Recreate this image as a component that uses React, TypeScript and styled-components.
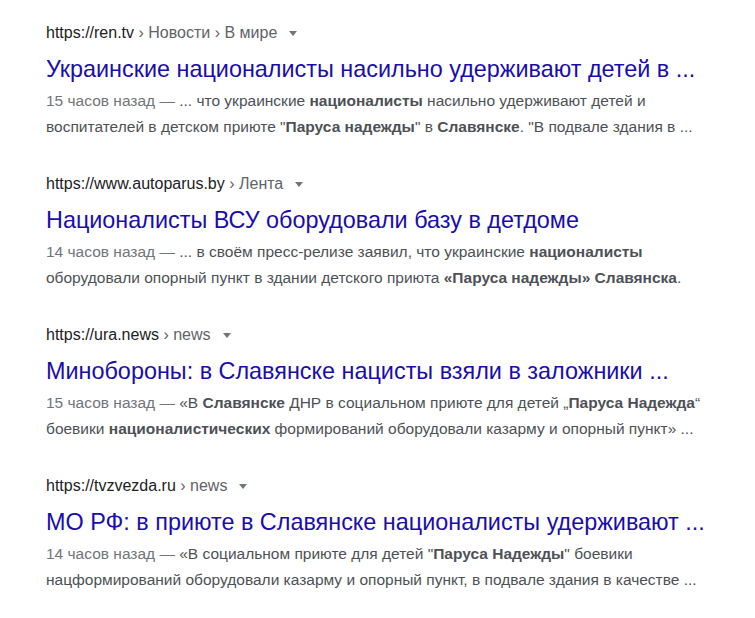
import React from 'react';
import styled, { createGlobalStyle } from 'styled-components';

const GlobalStyle = createGlobalStyle`
  body {
    margin: 0;
    background: #ffffff;
    font-family: Arial, "Liberation Sans", sans-serif;
  }
`;

const Page = styled.div`
  width: 755px;
  min-height: 618px;
  box-sizing: border-box;
  padding: 20px 0 0 46px;
  display: flex;
  flex-direction: column;
  gap: 31px;
`;

const Result = styled.div`
  display: flex;
  flex-direction: column;
`;

const UrlLine = styled.div`
  display: flex;
  align-items: center;
  height: 26px;
  font-size: 16px;
  white-space: nowrap;
`;

const Domain = styled.span`
  color: #202124;
`;

const Crumbs = styled.span`
  color: #5f6368;
  white-space: pre;
`;

const Caret = styled.span`
  display: inline-block;
  margin-left: 12px;
  margin-top: 1px;
  width: 0;
  height: 0;
  border-left: 4.5px solid transparent;
  border-right: 4.5px solid transparent;
  border-top: 5px solid #70757a;
`;

const Title = styled.a`
  display: block;
  margin-top: 8px;
  height: 30px;
  line-height: 30px;
  font-size: 23.4px;
  color: #1a0dab;
  text-decoration: none;
  white-space: nowrap;
`;

const Snippet = styled.div`
  margin-top: 4px;
  font-size: 15.5px;
  line-height: 26px;
  color: #4d5156;
`;

const Line = styled.div`
  white-space: nowrap;
`;

const Date = styled.span`
  color: #70757a;
`;

const B = styled.b`
  color: #4d5156;
  font-weight: bold;
`;

interface Item {
  domain: string;
  crumbs: string;
  title: string;
  date: string;
  lines: React.ReactNode[];
}

const items: Item[] = [
  {
    domain: 'https://ren.tv',
    crumbs: ' › Новости › В мире',
    title: 'Украинские националисты насильно удерживают детей в ...',
    date: '15 часов назад — ',
    lines: [
      <>... что украинские <B>националисты</B> насильно удерживают детей и</>,
      <>воспитателей в детском приюте "<B>Паруса надежды</B>" в <B>Славянске</B>. "В подвале здания в ...</>,
    ],
  },
  {
    domain: 'https://www.autoparus.by',
    crumbs: ' › Лента',
    title: 'Националисты ВСУ оборудовали базу в детдоме',
    date: '14 часов назад — ',
    lines: [
      <>... в своём пресс-релизе заявил, что украинские <B>националисты</B></>,
      <>оборудовали опорный пункт в здании детского приюта <B>«Паруса надежды» Славянска</B>.</>,
    ],
  },
  {
    domain: 'https://ura.news',
    crumbs: ' › news',
    title: 'Минобороны: в Славянске нацисты взяли в заложники ...',
    date: '15 часов назад — ',
    lines: [
      <>«В <B>Славянске</B> ДНР в социальном приюте для детей „<B>Паруса Надежда</B>“</>,
      <>боевики <B>националистических</B> формирований оборудовали казарму и опорный пункт» ...</>,
    ],
  },
  {
    domain: 'https://tvzvezda.ru',
    crumbs: ' › news',
    title: 'МО РФ: в приюте в Славянске националисты удерживают ...',
    date: '14 часов назад — ',
    lines: [
      <>«В социальном приюте для детей "<B>Паруса Надежды</B>" боевики</>,
      <>нацформирований оборудовали казарму и опорный пункт, в подвале здания в качестве ...</>,
    ],
  },
];

const App = () => {
  return (
    <>
      <GlobalStyle />
      <Page>
        {items.map((item) => (
          <Result key={item.domain}>
            <UrlLine>
              <Domain>{item.domain}</Domain>
              <Crumbs>{item.crumbs}</Crumbs>
              <Caret />
            </UrlLine>
            <Title href="#">{item.title}</Title>
            <Snippet>
              {item.lines.map((line, i) => (
                <Line key={i}>
                  {i === 0 && <Date>{item.date}</Date>}
                  {line}
                </Line>
              ))}
            </Snippet>
          </Result>
        ))}
      </Page>
    </>
  );
};

export default App;
